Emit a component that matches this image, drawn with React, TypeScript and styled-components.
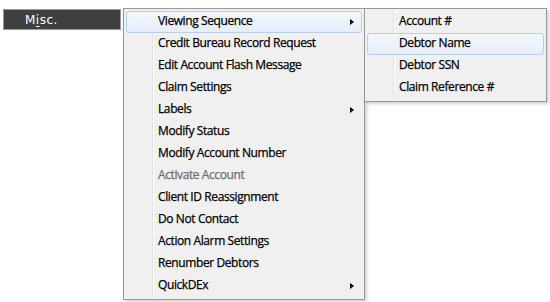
import styled, { createGlobalStyle } from 'styled-components';

const GlobalStyle = createGlobalStyle`
  html, body {
    margin: 0;
    padding: 0;
    background: #ffffff;
  }
`;

const Page = styled.div`
  position: relative;
  width: 550px;
  height: 302px;
  overflow: hidden;
  padding: 9px 0 0 3px;
  box-sizing: border-box;
`;

const MenuButton = styled.div`
  display: flex;
  align-items: center;
  width: 118px;
  height: 21px;
  box-sizing: border-box;
  padding-left: 21px;
  background: #3f3f3f;
  border: 1px solid #9a9a9a;
  color: #ffffff;
  font-family: 'DejaVu Sans', Verdana, sans-serif;
  font-size: 12px;
  letter-spacing: 0.5px;

  u {
    text-decoration: underline;
    text-underline-offset: 2px;
  }
`;

const Popup = styled.ul<{ $left: number; $top: number; $width: number }>`
  position: absolute;
  left: ${({ $left }) => $left}px;
  top: ${({ $top }) => $top}px;
  width: ${({ $width }) => $width}px;
  margin: 0;
  padding: 2px;
  list-style: none;
  box-sizing: border-box;
  background: #f0f0f0;
  border: 1px solid #979797;
  box-shadow: 2px 2px 3px rgba(0, 0, 0, 0.18);

  &::before {
    content: '';
    position: absolute;
    top: 2px;
    bottom: 2px;
    left: 28px;
    width: 1px;
    background: #e2e3e3;
    box-shadow: 1px 0 0 #ffffff;
  }
`;

const Item = styled.li<{ $active?: boolean; $disabled?: boolean }>`
  position: relative;
  z-index: 1;
  display: flex;
  align-items: center;
  height: 22px;
  box-sizing: border-box;
  padding: 0 0 3px 31px;
  border: 1px solid ${({ $active }) => ($active ? '#b5cff0' : 'transparent')};
  border-radius: 3px;
  background: ${({ $active }) =>
    $active ? 'linear-gradient(#f3f7fc, #e6eef9)' : 'transparent'};
  color: ${({ $disabled }) => ($disabled ? '#6d6d6d' : '#000000')};
  font-family: 'Open Sans', 'Noto Sans', sans-serif;
  font-size: 12px;
  letter-spacing: -0.4px;
  -webkit-text-stroke: 0.25px ${({ $disabled }) => ($disabled ? '#6d6d6d' : '#000000')};
  white-space: nowrap;
`;

const Arrow = styled.span`
  position: absolute;
  right: 7px;
  top: 7px;
  width: 0;
  height: 0;
  border-top: 3.5px solid transparent;
  border-bottom: 3.5px solid transparent;
  border-left: 4px solid #000000;
`;

type Entry = { label: string; sub?: boolean; active?: boolean; disabled?: boolean };

const mainItems: Entry[] = [
  { label: 'Viewing Sequence', sub: true, active: true },
  { label: 'Credit Bureau Record Request' },
  { label: 'Edit Account Flash Message' },
  { label: 'Claim Settings' },
  { label: 'Labels', sub: true },
  { label: 'Modify Status' },
  { label: 'Modify Account Number' },
  { label: 'Activate Account', disabled: true },
  { label: 'Client ID Reassignment' },
  { label: 'Do Not Contact' },
  { label: 'Action Alarm Settings' },
  { label: 'Renumber Debtors' },
  { label: 'QuickDEx', sub: true },
];

const subItems: Entry[] = [
  { label: 'Account #' },
  { label: 'Debtor Name', active: true },
  { label: 'Debtor SSN' },
  { label: 'Claim Reference #' },
];

const renderItems = (items: Entry[]) =>
  items.map((item) => (
    <Item key={item.label} $active={item.active} $disabled={item.disabled}>
      {item.label}
      {item.sub && <Arrow />}
    </Item>
  ));

const App = () => {
  return (
    <>
      <GlobalStyle />
      <Page>
        <MenuButton>
          M<u>i</u>sc.
        </MenuButton>
        <Popup $left={123} $top={8} $width={242}>
          {renderItems(mainItems)}
        </Popup>
        <Popup $left={364} $top={8} $width={183}>
          {renderItems(subItems)}
        </Popup>
      </Page>
    </>
  );
};

export default App;
